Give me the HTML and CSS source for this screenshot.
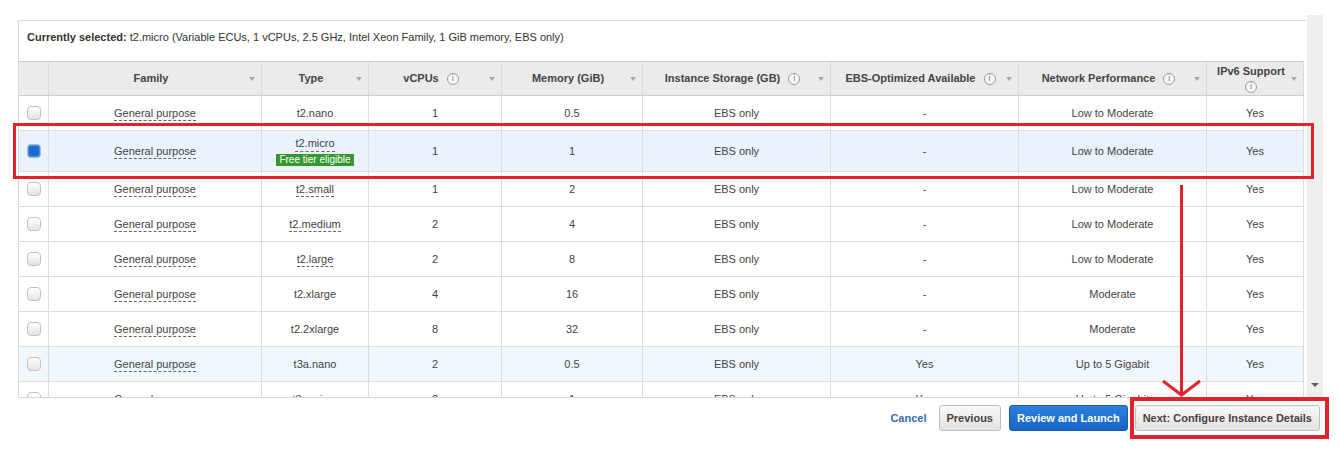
FILE: index.html
```html
<!DOCTYPE html>
<html lang="en">
<head>
<meta charset="utf-8">
<title>Choose an Instance Type</title>
<link rel="stylesheet" href="styles.css">
</head>
<body>
<div class="top">
  <div class="panel">
    <div class="current"><b>Currently selected:</b> t2.micro (Variable ECUs, 1 vCPUs, 2.5 GHz, Intel Xeon Family, 1 GiB memory, EBS only)</div>
    <div class="grid-wrap">
      <table class="grid">
        <colgroup>
          <col class="c-chk"><col class="c-fam"><col class="c-type"><col class="c-cpu"><col class="c-mem"><col class="c-sto"><col class="c-ebs"><col class="c-net"><col class="c-ip6">
        </colgroup>
        <thead>
          <tr>
            <th></th>
            <th><div class="th-in"><span>Family</span></div><i class="sort"></i></th>
            <th><div class="th-in"><span>Type</span></div><i class="sort"></i></th>
            <th><div class="th-in"><span>vCPUs</span><span class="info">i</span></div><i class="sort"></i></th>
            <th><div class="th-in"><span>Memory (GiB)</span></div><i class="sort"></i></th>
            <th><div class="th-in"><span>Instance Storage (GB)</span><span class="info">i</span></div><i class="sort"></i></th>
            <th><div class="th-in"><span>EBS-Optimized Available</span><span class="info">i</span></div><i class="sort"></i></th>
            <th><div class="th-in"><span>Network Performance</span><span class="info">i</span></div><i class="sort"></i></th>
            <th><div class="th-in th-stack"><span>IPv6 Support</span><span class="info">i</span></div><i class="sort"></i></th>
          </tr>
        </thead>
        <tbody>
          <tr>
            <td><span class="cb"></span></td>
            <td><span class="dash">General purpose</span></td>
            <td>t2.nano</td><td>1</td><td>0.5</td><td>EBS only</td><td>-</td><td>Low to Moderate</td><td>Yes</td>
          </tr>
          <tr class="selected">
            <td><span class="cb cb-on"></span></td>
            <td><span class="dash">General purpose</span></td>
            <td><div class="type-stack"><span class="dash">t2.micro</span><span class="free">Free tier eligible</span></div></td>
            <td>1</td><td>1</td><td>EBS only</td><td>-</td><td>Low to Moderate</td><td>Yes</td>
          </tr>
          <tr>
            <td><span class="cb"></span></td>
            <td><span class="dash">General purpose</span></td>
            <td><span class="dash">t2.small</span></td><td>1</td><td>2</td><td>EBS only</td><td>-</td><td>Low to Moderate</td><td>Yes</td>
          </tr>
          <tr>
            <td><span class="cb"></span></td>
            <td><span class="dash">General purpose</span></td>
            <td><span class="dash">t2.medium</span></td><td>2</td><td>4</td><td>EBS only</td><td>-</td><td>Low to Moderate</td><td>Yes</td>
          </tr>
          <tr>
            <td><span class="cb"></span></td>
            <td><span class="dash">General purpose</span></td>
            <td><span class="dash">t2.large</span></td><td>2</td><td>8</td><td>EBS only</td><td>-</td><td>Low to Moderate</td><td>Yes</td>
          </tr>
          <tr>
            <td><span class="cb"></span></td>
            <td><span class="dash">General purpose</span></td>
            <td>t2.xlarge</td><td>4</td><td>16</td><td>EBS only</td><td>-</td><td>Moderate</td><td>Yes</td>
          </tr>
          <tr>
            <td><span class="cb"></span></td>
            <td><span class="dash">General purpose</span></td>
            <td>t2.2xlarge</td><td>8</td><td>32</td><td>EBS only</td><td>-</td><td>Moderate</td><td>Yes</td>
          </tr>
          <tr class="hover">
            <td><span class="cb"></span></td>
            <td><span class="dash">General purpose</span></td>
            <td>t3a.nano</td><td>2</td><td>0.5</td><td>EBS only</td><td>Yes</td><td>Up to 5 Gigabit</td><td>Yes</td>
          </tr>
          <tr>
            <td><span class="cb"></span></td>
            <td><span class="dash">General purpose</span></td>
            <td>t3a.micro</td><td>2</td><td>1</td><td>EBS only</td><td>Yes</td><td>Up to 5 Gigabit</td><td>Yes</td>
          </tr>
        </tbody>
      </table>
    </div>
  </div>
  <div class="scrollbar"><i class="sb-down"></i></div>
</div>
<div class="actions">
  <a class="cancel" href="#">Cancel</a>
  <button class="btn btn-prev">Previous</button>
  <button class="btn btn-primary">Review and Launch</button>
  <button class="btn">Next: Configure Instance Details</button>
</div>

<div class="anno anno-row"></div>
<div class="anno anno-next"></div>
<svg class="anno-arrow" width="1340" height="463" viewBox="0 0 1340 463" aria-hidden="true">
  <line x1="1181.5" y1="185" x2="1181.5" y2="395" stroke="#e0232b" stroke-width="3"/>
  <polyline points="1163,381 1181.5,395 1200,381" fill="none" stroke="#e0232b" stroke-width="3"/>
</svg>
</body>
</html>
```

FILE: styles.css
```css
* { box-sizing: border-box; }

html, body {
  margin: 0;
  padding: 0;
  background: #ffffff;
}

body {
  position: relative;
  width: 1340px;
  height: 463px;
  overflow: hidden;
  font-family: "Liberation Sans", Arial, sans-serif;
  font-size: 11px;
  color: #444444;
}

.top {
  display: flex;
  align-items: flex-start;
  padding: 15px 0 0 18px;
}

.panel {
  width: 1288px;
  margin-top: 5px;
  border-top: 1px solid #d9d9d9;
  border-left: 1px solid #d9d9d9;
}

.current {
  height: 40px;
  padding: 9px 8px 0;
  line-height: 15px;
  color: #333333;
}

.current b { color: #333333; }

.grid-wrap {
  height: 337px;
  overflow: hidden;
  border-bottom: 1px solid #d9d9d9;
}

.grid {
  width: 1285px;
  table-layout: fixed;
  border-collapse: separate;
  border-spacing: 0;
}

.c-chk { width: 30px; }
.c-fam { width: 213px; }
.c-type { width: 107px; }
.c-cpu { width: 133px; }
.c-mem { width: 141px; }
.c-sto { width: 188px; }
.c-ebs { width: 188px; }
.c-net { width: 188px; }
.c-ip6 { width: 97px; }

.grid th {
  position: relative;
  height: 35px;
  padding: 0 8px 0 0;
  background: #ebebeb;
  border-top: 1px solid #cccccc;
  border-bottom: 1px solid #cccccc;
  border-right: 1px solid #d8d8d8;
  font-weight: bold;
  color: #444444;
  text-align: center;
  vertical-align: middle;
}

.th-in {
  display: flex;
  align-items: center;
  justify-content: center;
  gap: 8px;
  line-height: 13px;
}

.th-stack {
  flex-direction: column;
  gap: 3px;
}

.info {
  display: inline-flex;
  align-items: center;
  justify-content: center;
  width: 12px;
  height: 12px;
  border: 1px solid #9a9a9a;
  border-radius: 50%;
  font-size: 9px;
  font-weight: normal;
  line-height: 1;
  color: #777777;
  background: #f7f7f7;
}

.sort {
  position: absolute;
  right: 6px;
  top: 50%;
  margin-top: -2px;
  width: 0;
  height: 0;
  border-left: 3px solid transparent;
  border-right: 3px solid transparent;
  border-top: 4px solid #a8a8a8;
}

.grid td {
  height: 35px;
  padding: 0;
  border-right: 1px solid #dddddd;
  border-bottom: 1px solid #dddddd;
  text-align: center;
  vertical-align: middle;
  color: #444444;
  background: #ffffff;
}

.grid tr.selected td {
  height: 41px;
  background: #e9f2fd;
}

.grid tr.hover td { background: #f0f7fe; }

.dash {
  border-bottom: 1px dashed #666666;
  padding-bottom: 1px;
}

.cb {
  display: inline-block;
  width: 14px;
  height: 14px;
  vertical-align: middle;
  border: 1px solid #c2c2c2;
  border-radius: 4px;
  background: linear-gradient(#ffffff, #e4e4e4);
}

.cb-on {
  border-color: #a9b8cc;
  background: #1b6bd2;
  box-shadow: inset 0 0 0 1px #4d8fe0;
}

.type-stack {
  display: flex;
  flex-direction: column;
  align-items: center;
  gap: 2px;
}

.type-stack .dash { line-height: 13px; }

.free {
  display: inline-block;
  padding: 0 3px;
  line-height: 12px;
  font-size: 10px;
  color: #ffffff;
  background: #35982f;
}

.scrollbar {
  display: flex;
  align-items: flex-end;
  justify-content: center;
  width: 16px;
  height: 385px;
  margin-left: 1px;
  padding-bottom: 13px;
  background: #efefef;
}

.sb-down {
  width: 0;
  height: 0;
  border-left: 4px solid transparent;
  border-right: 4px solid transparent;
  border-top: 4px solid #606060;
}

.actions {
  display: flex;
  justify-content: flex-end;
  align-items: center;
  gap: 7px;
  margin-top: 5px;
  padding-right: 20px;
}

.cancel {
  margin-right: 5px;
  font-weight: bold;
  color: #2f6fb8;
  text-decoration: none;
}

.btn {
  height: 26px;
  padding: 0 7px;
  border: 1px solid #bdbdbd;
  border-radius: 3px;
  background: linear-gradient(#f9f9f9, #e2e2e2);
  font-family: "Liberation Sans", Arial, sans-serif;
  font-size: 11px;
  font-weight: bold;
  color: #444444;
}

.btn-prev { margin-right: 1px; }

.btn-primary {
  border-color: #1a5cb0;
  background: linear-gradient(#2b80dd, #1565c6);
  color: #ffffff;
}

.anno {
  position: absolute;
  pointer-events: none;
}

.anno-row {
  left: 13px;
  top: 123px;
  width: 1301px;
  height: 56px;
  border: 3px solid #e0232b;
}

.anno-next {
  left: 1130px;
  top: 397px;
  width: 199px;
  height: 42px;
  border: 4px solid #e0232b;
}

.anno-arrow {
  position: absolute;
  left: 0;
  top: 0;
  pointer-events: none;
}
```
